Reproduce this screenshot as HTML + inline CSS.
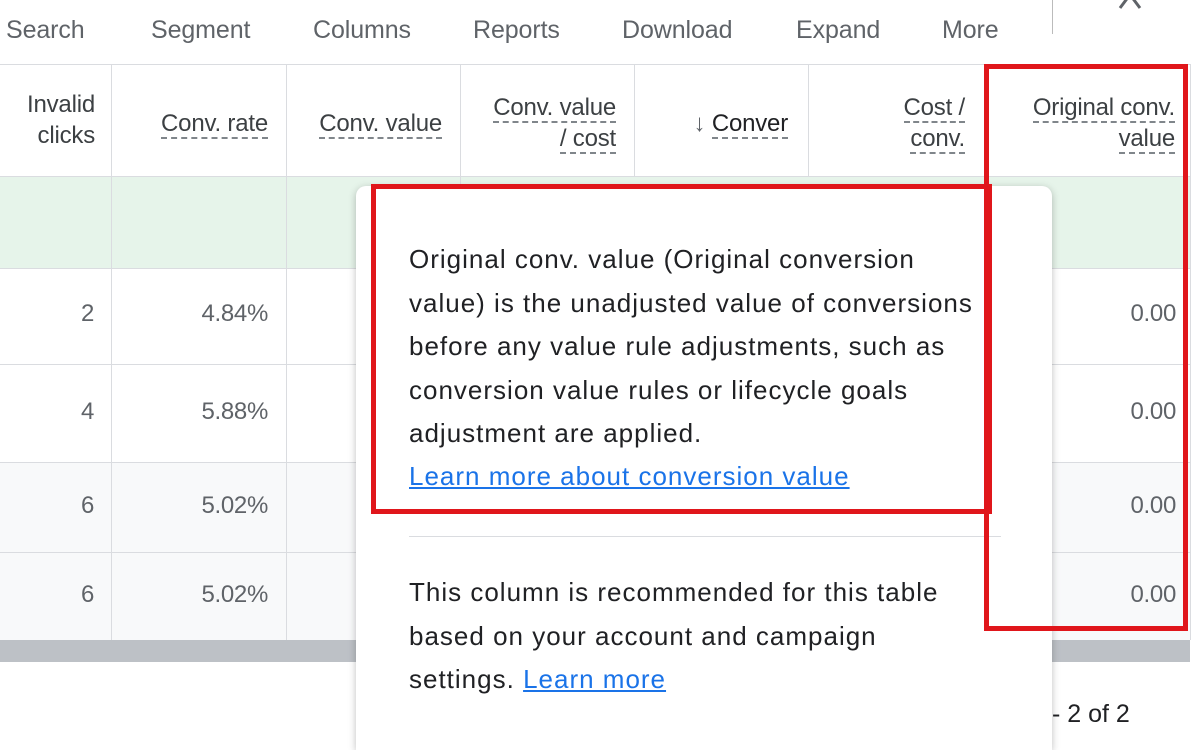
<!DOCTYPE html>
<html><head><meta charset="utf-8"><style>
*{margin:0;padding:0;box-sizing:border-box}
html,body{width:1200px;height:750px;overflow:hidden}
body{background:#fff;font-family:"Liberation Sans",sans-serif;position:relative;color:#3c4043}
.a{position:absolute;white-space:nowrap}
.tb{top:16px;font-size:25px;color:#5f6368;letter-spacing:-0.1px}
.hd{font-size:24px;color:#3c4043;text-align:right;line-height:31px;letter-spacing:-0.2px}
.u{border-bottom:2px dashed #80868b}
.vl{position:absolute;width:1px;background:#dadce0}
.hl{position:absolute;height:1px;background:#dadce0;left:0;width:1190px}
.num{font-size:24px;color:#5f6368;text-align:right;letter-spacing:-0.3px}
.pt{font-size:26px;color:#202124;line-height:43.5px;letter-spacing:1px}
a{color:#1a73e8;text-decoration:underline}
</style></head><body>
<div class="a tb" style="left:6px">Search</div>
<div class="a tb" style="left:151px">Segment</div>
<div class="a tb" style="left:313px">Columns</div>
<div class="a tb" style="left:473px">Reports</div>
<div class="a tb" style="left:622px">Download</div>
<div class="a tb" style="left:796px">Expand</div>
<div class="a tb" style="left:942px">More</div>
<div class="vl" style="left:1052px;top:0;height:34px;background:#bbb"></div>
<svg class="a" style="left:1116px;top:0" width="32" height="14"><path d="M13 -4 L4 8 M15 -4 L24 8" stroke="#5f6368" stroke-width="3" fill="none"/></svg>

<div class="hl" style="top:64px"></div>
<div class="a" style="left:0;top:176px;width:1190px;height:92px;background:#e6f4ea"></div>
<div class="a" style="left:0;top:462px;width:1190px;height:178px;background:#f8f9fa"></div>
<div class="a" style="left:0;top:640px;width:1190px;height:22px;background:#bdc1c6"></div>
<div class="hl" style="top:176px"></div>
<div class="hl" style="top:268px"></div>
<div class="hl" style="top:364px"></div>
<div class="hl" style="top:462px"></div>
<div class="hl" style="top:552px"></div>
<div class="vl" style="left:1190px;top:64px;height:576px"></div>
<div class="vl" style="left:111px;top:64px;height:576px"></div>
<div class="vl" style="left:286px;top:64px;height:576px"></div>
<div class="vl" style="left:460px;top:64px;height:576px"></div>
<div class="vl" style="left:634px;top:64px;height:112px"></div>
<div class="vl" style="left:808px;top:64px;height:112px"></div>

<div class="a hd" style="right:1105px;top:89px">Invalid<br>clicks</div>
<div class="a hd" style="right:932px;top:108px"><span class="u">Conv. rate</span></div>
<div class="a hd" style="right:758px;top:108px"><span class="u">Conv. value</span></div>
<div class="a hd" style="right:584px;top:92px"><span class="u">Conv. value</span><br><span class="u">/ cost</span></div>
<div class="a hd" style="right:412px;top:108px"><span style="color:#5f6368">↓ </span><span class="u" style="color:#202124">Conver</span></div>
<div class="a hd" style="right:235px;top:92px"><span class="u">Cost /</span><br><span class="u">conv.</span></div>
<div class="a hd" style="right:25px;top:92px"><span class="u">Original conv.</span><br><span class="u">value</span></div>

<div class="a num" style="right:1106px;top:300px">2</div>
<div class="a num" style="right:1106px;top:398px">4</div>
<div class="a num" style="right:1106px;top:492px">6</div>
<div class="a num" style="right:1106px;top:581px">6</div>
<div class="a num" style="right:932px;top:300px">4.84%</div>
<div class="a num" style="right:932px;top:398px">5.88%</div>
<div class="a num" style="right:932px;top:492px">5.02%</div>
<div class="a num" style="right:932px;top:581px">5.02%</div>
<div class="a num" style="right:24px;top:300px">0.00</div>
<div class="a num" style="right:24px;top:398px">0.00</div>
<div class="a num" style="right:24px;top:492px">0.00</div>
<div class="a num" style="right:24px;top:581px">0.00</div>
<div class="a" style="left:1052px;top:700px;font-size:25px;color:#202124">- 2 of 2</div>

<div class="a" style="left:356px;top:186px;width:696px;height:564px;background:#fff;border-radius:10px 10px 0 0;box-shadow:0 2px 8px rgba(0,0,0,.25)"></div>
<div class="a pt" style="left:409px;top:238px">Original conv. value (Original conversion<br>value) is the unadjusted value of conversions<br>before any value rule adjustments, such as<br>conversion value rules or lifecycle goals<br>adjustment are applied.</div>
<div class="a pt" style="left:409px;top:455px"><a>Learn more about conversion value</a></div>
<div class="a" style="left:409px;top:536px;width:592px;height:1px;background:#dadce0"></div>
<div class="a pt" style="left:409px;top:571px">This column is recommended for this table<br>based on your account and campaign<br>settings. <a>Learn more</a></div>

<div class="a" style="left:371px;top:184px;width:621px;height:330px;border:5px solid #e0161b"></div>
<div class="a" style="left:984px;top:64px;width:204px;height:567px;border:5px solid #e0161b"></div>
</body></html>
